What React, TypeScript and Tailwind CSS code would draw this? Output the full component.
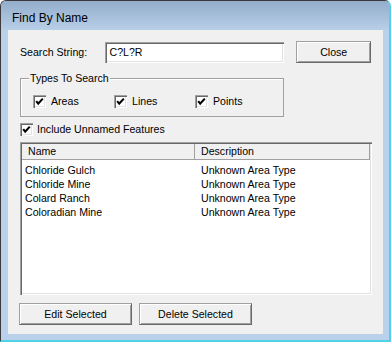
import React from "react";

const raised =
  "border border-t-[#a0a0a0] border-l-[#a0a0a0] border-r-[#696969] border-b-[#696969] shadow-[inset_1px_1px_0_#fff,inset_-1px_-1px_0_#a0a0a0] bg-[#f0f0f0]";
const sunken =
  "shadow-[inset_1px_1px_0_#a0a0a0,inset_2px_2px_0_#696969,inset_-1px_-1px_0_#fff,inset_-2px_-2px_0_#e3e3e3]";

const rows = ["Chloride Gulch", "Chloride Mine", "Colard Ranch", "Coloradian Mine"];

function Check({ label, gap = "ml-[5px]" }: { label: string; gap?: string }) {
  return (
    <div className="flex items-center h-[13px]">
      <span className={`relative w-[13px] h-[13px] bg-white ${sunken}`}>
        <svg className="absolute inset-0" width="13" height="13" viewBox="0 0 13 13">
          <path d="M3.2 6.2 L5.2 8.6 L9.8 3.6" fill="none" stroke="#000" strokeWidth="2.1" />
        </svg>
      </span>
      <span className={gap}>{label}</span>
    </div>
  );
}

export default function App() {
  return (
    <div
      className="w-[391px] h-[342px] flex flex-col bg-[#b9d1ea] rounded-t-[6px] border-t border-l border-t-[#3b3b3b] border-l-[#3b3b3b] border-r-2 border-b-2 border-r-[#4fd1e6] border-b-[#4fd1e6] text-black overflow-hidden"
      style={{ fontFamily: '"Liberation Sans", Arial, sans-serif' }}
    >
      {/* title bar */}
      <div className="h-[29px] shrink-0 flex items-center pl-[11px] pt-[4px] bg-gradient-to-b from-[#93adcb] to-[#b8cfe8] text-[12px]">
        Find By Name
      </div>

      {/* client area */}
      <div className="ml-[7px] mr-[6px] h-[304px] bg-[#f0f0f0] px-[12px] pt-[11px] text-[10.6px] leading-[13px]">
        {/* search row */}
        <div className="flex items-center h-[22px]">
          <span className="w-[86px]">Search String:</span>
          <div className={`w-[180px] h-[21px] bg-white flex items-center pl-[4px] ${sunken}`}>C?L?R</div>
          <button className={`ml-[12px] w-[75px] h-[22px] ${raised}`}>Close</button>
        </div>

        {/* types group */}
        <div className="relative mt-[15px] w-[264px] h-[39px] border border-[#a0a0a0] shadow-[inset_1px_1px_0_#fff]">
          <span className="absolute left-[8px] -top-[7px] px-[1px] bg-[#f0f0f0]">Types To Search</span>
          <div className="flex pl-[12px] pt-[16px]">
            <div className="w-[81px]">
              <Check label="Areas" />
            </div>
            <div className="w-[81px]">
              <Check label="Lines" />
            </div>
            <div className="w-[81px]">
              <Check label="Points" />
            </div>
          </div>
        </div>

        <div className="mt-[6px]">
          <Check label="Include Unnamed Features" gap="ml-[4px]" />
        </div>

        {/* results list */}
        <div className={`mt-[6px] w-[352px] h-[153px] bg-white p-[2px] ${sunken}`}>
          <div className="grid grid-cols-[173px_175px] h-[16px] bg-[#f0f0f0] border-b border-[#a0a0a0] items-center">
            <span className="pl-[6px] border-r border-[#a0a0a0] h-full flex items-center">Name</span>
            <span className="pl-[6px] border-r border-[#a0a0a0] h-full flex items-center">Description</span>
          </div>
          <div className="mt-[3px]">
            {rows.map((r) => (
              <div key={r} className="grid grid-cols-[173px_175px] h-[14px] items-center">
                <span className="pl-[3px]">{r}</span>
                <span className="pl-[6px]">Unknown Area Type</span>
              </div>
            ))}
          </div>
        </div>

        {/* bottom buttons */}
        <div className="flex gap-[7px] mt-[8px] -ml-[1px]">
          <button className={`w-[113px] h-[22px] ${raised}`}>Edit Selected</button>
          <button className={`w-[113px] h-[22px] ${raised}`}>Delete Selected</button>
        </div>
      </div>
    </div>
  );
}
